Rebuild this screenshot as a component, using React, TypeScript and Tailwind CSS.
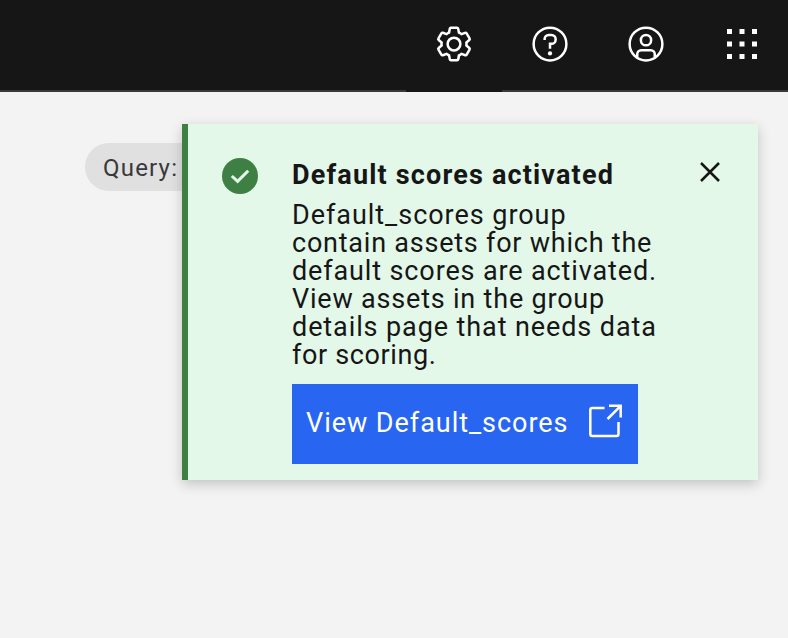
import React from "react";

function SettingsIcon() {
  return (
    <svg viewBox="0 0 32 32" className="size-10 fill-white">
      <path d="M27,16.76c0-.25,0-.5,0-.76s0-.51,0-.77l1.92-1.68A2,2,0,0,0,29.3,11L26.94,7a2,2,0,0,0-1.73-1,2,2,0,0,0-.64.1l-2.43.82a11.35,11.35,0,0,0-1.31-.75l-.51-2.52a2,2,0,0,0-2-1.61H13.64a2,2,0,0,0-2,1.61l-.51,2.52a11.48,11.48,0,0,0-1.32.75L7.43,6.06A2,2,0,0,0,6.79,6,2,2,0,0,0,5.06,7L2.7,11a2,2,0,0,0,.41,2.51L5,15.24c0,.25,0,.5,0,.76s0,.51,0,.77L3.11,18.45A2,2,0,0,0,2.7,21L5.06,25a2,2,0,0,0,1.73,1,2,2,0,0,0,.64-.1l2.43-.82a11.35,11.35,0,0,0,1.31.75l.51,2.52a2,2,0,0,0,2,1.61h4.72a2,2,0,0,0,2-1.61l.51-2.52a11.48,11.48,0,0,0,1.32-.75l2.42.82a2,2,0,0,0,.64.1,2,2,0,0,0,1.73-1L29.3,21a2,2,0,0,0-.41-2.51ZM25.21,24l-3.43-1.16a8.86,8.86,0,0,1-2.71,1.57L18.36,28H13.64l-.71-3.55a9.36,9.36,0,0,1-2.7-1.57L6.79,24,4.43,20l2.72-2.4a8.9,8.9,0,0,1,0-3.13L4.43,12,6.79,8l3.43,1.16a8.86,8.86,0,0,1,2.71-1.57L13.64,4h4.72l.71,3.55a9.36,9.36,0,0,1,2.7,1.57L25.21,8,27.57,12l-2.72,2.4a8.9,8.9,0,0,1,0,3.13L27.57,20Z" />
      <circle cx="16" cy="16" r="5.1" className="fill-none stroke-white stroke-2" />
    </svg>
  );
}

function HelpIcon() {
  return (
    <svg viewBox="0 0 32 32" className="size-10 fill-white">
      <circle cx="16" cy="16" r="13.1" fill="none" stroke="white" strokeWidth="2" />
      <path d="M11.7 12.8V12a3.3 3.3 0 0 1 3.3-3.3h2.2a3.3 3.3 0 0 1 3.3 3.3v.5a3.3 3.3 0 0 1-3.3 3.3H16v4" fill="none" stroke="white" strokeWidth="2" />
      <circle cx="16" cy="23.5" r="1.7" />
    </svg>
  );
}

function UserIcon() {
  return (
    <svg viewBox="0 0 32 32" className="size-10" fill="none" stroke="white" strokeWidth="2">
      <circle cx="16" cy="16" r="13.1" />
      <circle cx="16" cy="12.9" r="4.1" />
      <path d="M9 26.8V24a3.1 3.1 0 0 1 3.1-3.1h7.8a3.1 3.1 0 0 1 3.1 3.1v2.8" />
    </svg>
  );
}

function SwitcherIcon() {
  return (
    <svg viewBox="0 0 40 40" className="size-10 fill-white">
      {[5, 17.5, 30].map((y) =>
        [5, 17.5, 30].map((x) => <rect key={`${x}-${y}`} x={x} y={y} width="5" height="5" />)
      )}
    </svg>
  );
}

const lines = [
  { text: "Default_scores group", cls: "tracking-[0.96px]" },
  { text: "contain assets for which the", cls: "tracking-[0.77px]" },
  { text: "default scores are activated.", cls: "tracking-[0.87px]" },
  { text: "View assets in the group", cls: "tracking-[0.8px]" },
  { text: "details page that needs data", cls: "tracking-[0.9px]" },
  { text: "for scoring.", cls: "tracking-[0.63px]" },
];

export default function App() {
  return (
    <div className="h-[638px] w-[788px] overflow-hidden bg-[#f3f3f3] font-['Roboto',sans-serif] text-[#161616]">
      <header className="flex h-[92px] justify-end bg-[#161616]">
        <div className="w-[406px] border-b-2 border-[#393939]" />
        <button className="flex w-24 justify-center pt-6"><SettingsIcon /></button>
        <button className="flex w-24 justify-center border-b-2 border-[#393939] pt-6"><HelpIcon /></button>
        <button className="flex w-24 justify-center border-b-2 border-[#393939] pt-6"><UserIcon /></button>
        <button className="flex w-[94px] border-b-2 border-[#393939] pt-6 pl-7"><SwitcherIcon /></button>
      </header>

      <main className="flex items-start pt-8 pl-[85px]">
        <div className="mt-[19px] -mr-10 flex h-12 w-[137px] shrink-0 items-center rounded-full bg-[#e0e0e0] pt-0.5 pl-[18px] text-[24px] tracking-[1.2px] text-[#393939]">
          Query:
        </div>
        <section className="relative flex h-[356px] w-[576px] shrink-0 border-l-6 border-[#3e8043] bg-[#e3f8e8] shadow-[0_4px_12px_rgba(0,0,0,0.2)]">
          <svg viewBox="0 0 36 36" className="mt-[34px] ml-[34px] size-9 shrink-0">
            <circle cx="18" cy="18" r="18" fill="#3e8043" />
            <path d="M9.8 18L15.6 23.4L26.2 12.8" fill="none" stroke="#e3f8e8" strokeWidth="3" />
          </svg>
          <div className="ml-[34px] flex w-[400px] flex-col items-start whitespace-nowrap">
            <h2 className="mt-[33px] text-[27px] leading-9 font-bold tracking-[1.17px]">Default scores activated</h2>
            <p className="mt-2 text-[27px] leading-7">
              {lines.map((l) => (
                <span key={l.text} className={`block ${l.cls}`}>{l.text}</span>
              ))}
            </p>
            <button className="mt-[15px] flex h-20 w-[346px] items-center bg-[#2866f2] pl-[14px] text-[27px] text-white">
              <span className="-mt-0.5 w-[282px] text-left tracking-[0.96px]">View Default_scores</span>
              <svg viewBox="0 0 36 36" className="-mt-1.5 size-9 shrink-0" fill="none" stroke="white" strokeWidth="2.5">
                <path d="M16.5 5H4.3A2 2 0 0 0 2.3 7V31A2 2 0 0 0 4.3 33H28.5A2 2 0 0 0 30.5 31V19" />
                <path d="M21 2.8H32.7V14.5M32.7 2.8L19.5 16" />
              </svg>
            </button>
          </div>
          <svg viewBox="0 0 24 24" className="mt-9 ml-[6px] size-6 shrink-0" fill="none" stroke="#161616" strokeWidth="2.5">
            <path d="M3 3L21 21M21 3L3 21" />
          </svg>
        </section>
      </main>
    </div>
  );
}
